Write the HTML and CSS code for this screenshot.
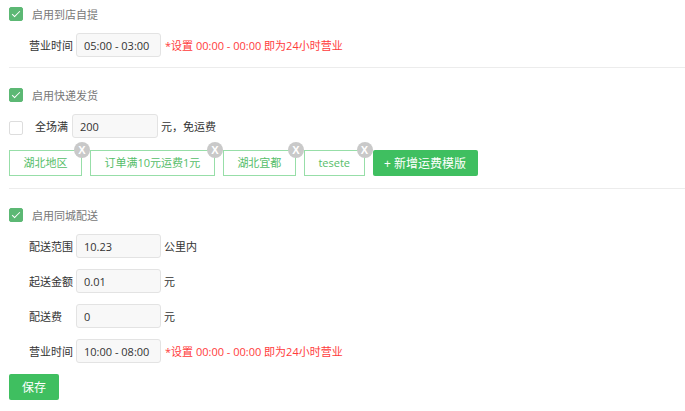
FILE: index.html
```html
<!DOCTYPE html>
<html lang="zh-CN">
<head>
    <meta charset="UTF-8">
    <title>配送设置</title>
    <link rel="stylesheet" href="styles.css">
</head>
<body>
    <div class="section first">
        <div class="check-row">
            <span class="checkbox checked"></span>
            <span class="check-label">启用到店自提</span>
        </div>
        <div class="form-row">
            <span class="label">营业时间</span>
            <input class="input" type="text" value="05:00 - 03:00">
            <span class="hint">*设置 00:00 - 00:00 即为24小时营业</span>
        </div>
    </div>

    <div class="section">
        <div class="check-row">
            <span class="checkbox checked"></span>
            <span class="check-label">启用快递发货</span>
        </div>
        <div class="form-row free-row">
            <span class="checkbox"></span>
            <span class="free-label">全场满</span>
            <input class="input" type="text" value="200">
            <span class="suffix">元，免运费</span>
        </div>
        <div class="tags">
            <span class="tag">湖北地区<i class="close">X</i></span>
            <span class="tag">订单满10元运费1元<i class="close">X</i></span>
            <span class="tag">湖北宜都<i class="close">X</i></span>
            <span class="tag">tesete<i class="close">X</i></span>
            <button class="btn add-btn">+ 新增运费模版</button>
        </div>
    </div>

    <div class="section last">
        <div class="check-row">
            <span class="checkbox checked"></span>
            <span class="check-label">启用同城配送</span>
        </div>
        <div class="form-row">
            <span class="label">配送范围</span>
            <input class="input" type="text" value="10.23">
            <span class="suffix">公里内</span>
        </div>
        <div class="form-row">
            <span class="label">起送金额</span>
            <input class="input" type="text" value="0.01">
            <span class="suffix">元</span>
        </div>
        <div class="form-row">
            <span class="label">配送费</span>
            <input class="input" type="text" value="0">
            <span class="suffix">元</span>
        </div>
        <div class="form-row">
            <span class="label">营业时间</span>
            <input class="input" type="text" value="10:00 - 08:00">
            <span class="hint">*设置 00:00 - 00:00 即为24小时营业</span>
        </div>
        <button class="btn save-btn">保存</button>
    </div>
</body>
</html>
```

FILE: styles.css
```css
body {
    margin: 0;
    padding: 0 0 0 9px;
    background: #fff;
    font-family: "Open Sans", "Noto Sans CJK SC", sans-serif;
    font-size: 11px;
    color: #333;
}
.section {
    padding: 17px 0 12px;
    border-bottom: 1px solid #ececec;
}
.section.first {
    padding-top: 4px;
    padding-bottom: 10px;
}
.section.last {
    padding-top: 16px;
    border-bottom: none;
}
.check-row {
    display: flex;
    align-items: center;
    height: 20px;
}
.checkbox {
    display: inline-block;
    box-sizing: border-box;
    width: 14px;
    height: 14px;
    border: 1px solid #ddd;
    border-radius: 2px;
    background: #fff;
    position: relative;
}
.checkbox.checked {
    background: #5cb874;
    border-color: #5cb874;
}
.checkbox.checked::after {
    content: "";
    position: absolute;
    left: 4px;
    top: 1px;
    width: 3px;
    height: 7px;
    border: solid #fff;
    border-width: 0 1.5px 1.5px 0;
    transform: rotate(45deg);
}
.check-label {
    margin-left: 9px;
    color: #777;
}
.form-row {
    display: flex;
    align-items: center;
    height: 24px;
    margin-top: 11px;
}
.check-row + .form-row {
    margin-top: 9px;
}
.label {
    width: 47px;
    margin-left: 20px;
    white-space: nowrap;
}
.input {
    box-sizing: border-box;
    width: 85px;
    height: 24px;
    padding: 0 6px 0 7px;
    border: 1px solid #e3e3e3;
    border-radius: 3px;
    background: #f8f8f8;
    font-family: "Open Sans", "Noto Sans CJK SC", sans-serif;
    font-size: 11px;
    color: #333;
    outline: none;
}
.suffix {
    margin-left: 3px;
}
.hint {
    margin-left: 4px;
    color: #ff3b3b;
}
.free-row {
    margin-top: 8px;
}
.free-row .checkbox {
    margin-top: 4px;
}
.free-label {
    margin: 0 4px 0 12px;
}
.free-row .input {
    width: 86px;
}
.tags {
    display: flex;
    gap: 8px;
    margin-top: 12px;
}
.tag {
    position: relative;
    box-sizing: border-box;
    height: 26px;
    line-height: 24px;
    padding: 0 13.5px;
    border: 1px solid #97dea8;
    color: #55bd68;
    white-space: nowrap;
}
.close {
    position: absolute;
    top: -9px;
    right: -9px;
    width: 16px;
    height: 16px;
    border-radius: 50%;
    background: #c9c9c9;
    color: #fff;
    font-style: normal;
    font-weight: bold;
    font-size: 11px;
    line-height: 16px;
    text-align: center;
    font-family: "Liberation Sans", sans-serif;
}
.btn {
    height: 26px;
    border: none;
    border-radius: 2px;
    background: #3fbf60;
    color: #fff;
    font-family: "Open Sans", "Noto Sans CJK SC", sans-serif;
    font-size: 12px;
    cursor: pointer;
    padding: 0;
}
.add-btn {
    width: 105px;
}
.save-btn {
    width: 50px;
    margin-top: 11px;
    display: block;
}
```
